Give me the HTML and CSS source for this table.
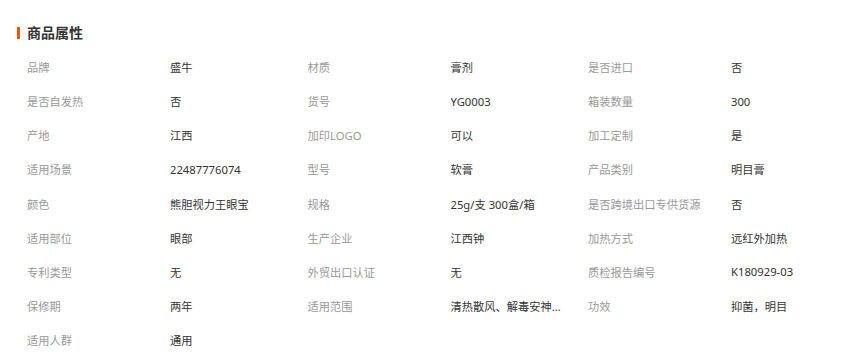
FILE: index.html
```html
<!DOCTYPE html>
<html lang="zh-CN">
<head>
<meta charset="utf-8">
<title>商品属性</title>
<link rel="stylesheet" href="styles.css">
</head>
<body>
<section class="attrs">
  <h2 class="attrs-title">商品属性</h2>
  <ul class="attrs-list">
    <li class="attr"><span class="attr-name">品牌</span><span class="attr-value">盛牛</span></li>
    <li class="attr"><span class="attr-name">材质</span><span class="attr-value">膏剂</span></li>
    <li class="attr"><span class="attr-name">是否进口</span><span class="attr-value">否</span></li>
    <li class="attr"><span class="attr-name">是否自发热</span><span class="attr-value">否</span></li>
    <li class="attr"><span class="attr-name">货号</span><span class="attr-value">YG0003</span></li>
    <li class="attr"><span class="attr-name">箱装数量</span><span class="attr-value">300</span></li>
    <li class="attr"><span class="attr-name">产地</span><span class="attr-value">江西</span></li>
    <li class="attr"><span class="attr-name">加印LOGO</span><span class="attr-value">可以</span></li>
    <li class="attr"><span class="attr-name">加工定制</span><span class="attr-value">是</span></li>
    <li class="attr"><span class="attr-name">适用场景</span><span class="attr-value">22487776074</span></li>
    <li class="attr"><span class="attr-name">型号</span><span class="attr-value">软膏</span></li>
    <li class="attr"><span class="attr-name">产品类别</span><span class="attr-value">明目膏</span></li>
    <li class="attr"><span class="attr-name">颜色</span><span class="attr-value">熊胆视力王眼宝</span></li>
    <li class="attr"><span class="attr-name">规格</span><span class="attr-value">25g/支 300盒/箱</span></li>
    <li class="attr"><span class="attr-name">是否跨境出口专供货源</span><span class="attr-value">否</span></li>
    <li class="attr"><span class="attr-name">适用部位</span><span class="attr-value">眼部</span></li>
    <li class="attr"><span class="attr-name">生产企业</span><span class="attr-value">江西钟</span></li>
    <li class="attr"><span class="attr-name">加热方式</span><span class="attr-value">远红外加热</span></li>
    <li class="attr"><span class="attr-name">专利类型</span><span class="attr-value">无</span></li>
    <li class="attr"><span class="attr-name">外贸出口认证</span><span class="attr-value">无</span></li>
    <li class="attr"><span class="attr-name">质检报告编号</span><span class="attr-value">K180929-03</span></li>
    <li class="attr"><span class="attr-name">保修期</span><span class="attr-value">两年</span></li>
    <li class="attr"><span class="attr-name">适用范围</span><span class="attr-value">清热散风、解毒安神...</span></li>
    <li class="attr"><span class="attr-name">功效</span><span class="attr-value">抑菌，明目</span></li>
    <li class="attr"><span class="attr-name">适用人群</span><span class="attr-value">通用</span></li>
  </ul>
</section>
</body>
</html>
```
FILE: styles.css
```css
html, body {
  margin: 0;
  padding: 0;
  background: #fff;
}

body {
  font-family: "Noto Sans", "Noto Sans CJK SC", sans-serif;
  color: #333;
}

.attrs {
  padding: 23px 0 0 17px;
}

.attrs-title {
  display: flex;
  align-items: center;
  margin: 0;
  height: 20px;
  font-size: 14px;
  line-height: 20px;
  font-weight: 700;
  color: #333;
}

.attrs-title::before {
  content: "";
  width: 3px;
  height: 12px;
  margin-right: 7px;
  background: #ff5000;
}

.attrs-list {
  list-style: none;
  margin: 7px 0 0 10px;
  padding: 0;
  display: grid;
  grid-template-columns: repeat(3, 280.5px);
  grid-auto-rows: 34.125px;
  font-size: 11.25px;
}

.attr {
  display: flex;
  align-items: center;
  white-space: nowrap;
}

.attr-name {
  flex: 0 0 143px;
  color: #999;
}

.attr-value {
  color: #333;
  overflow: hidden;
  text-overflow: ellipsis;
}
```
